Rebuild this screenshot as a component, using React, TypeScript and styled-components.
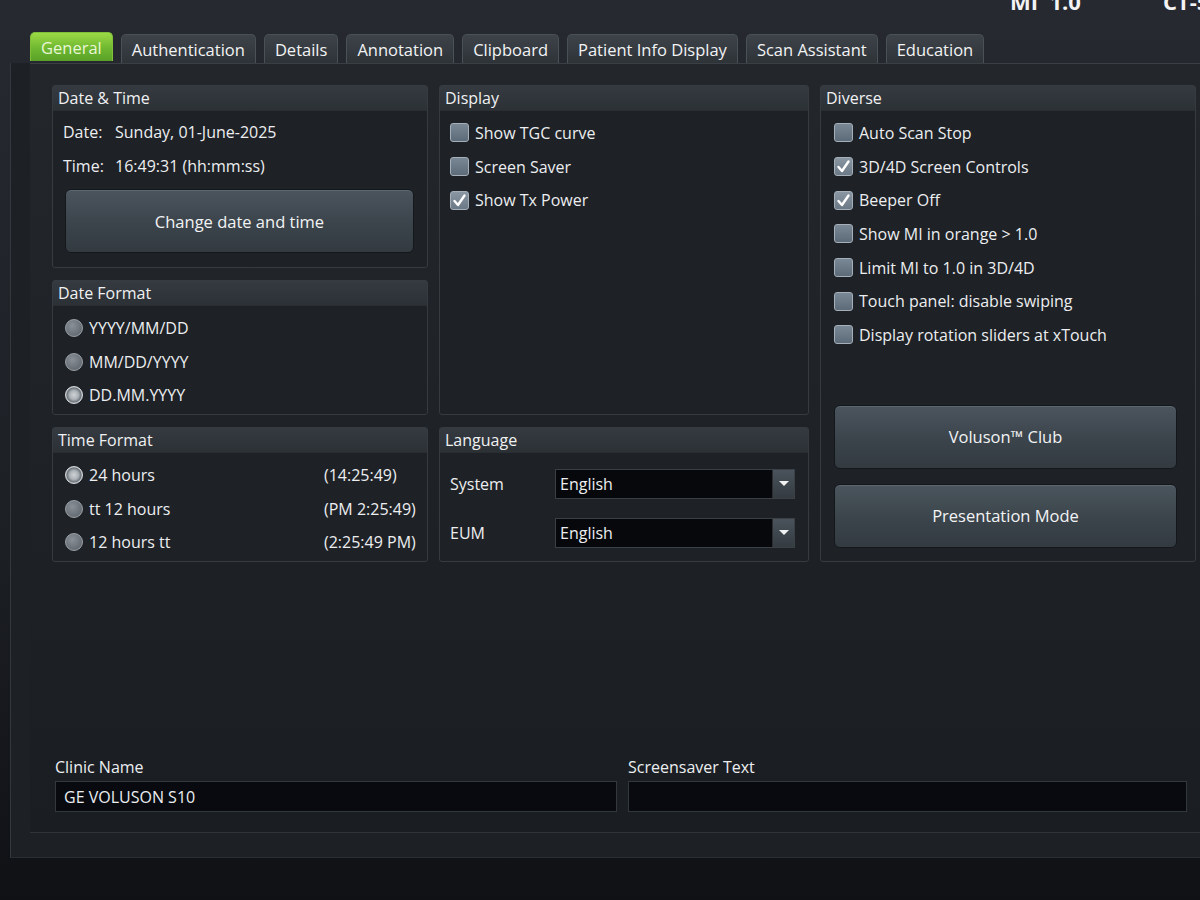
import React from 'react';
import styled, { createGlobalStyle } from 'styled-components';

const GlobalStyle = createGlobalStyle`
  html, body {
    margin: 0;
    padding: 0;
    width: 1200px;
    height: 900px;
    overflow: hidden;
    background: linear-gradient(180deg, #262a30 0%, #1c1f24 60%, #0f1115 100%);
    font-family: "Open Sans", "Noto Sans", "Liberation Sans", sans-serif;
    color: #eceef0;
  }
`;

const Screen = styled.div`
  width: 1200px;
  height: 900px;
  display: flex;
  flex-direction: column;
  overflow: hidden;
`;

const StatusStrip = styled.div`
  height: 10px;
  overflow: hidden;
  display: flex;
  align-items: flex-end;
  gap: 82px;
  padding-left: 1010px;
`;

const StatusText = styled.span`
  font-size: 22px;
  font-weight: 700;
  line-height: 22px;
  margin-bottom: -2px;
  white-space: nowrap;
  color: #f4f4f4;
`;

const TabBar = styled.div`
  display: flex;
  gap: 8px;
  margin: 22px 0 0 30px;
  align-items: flex-end;
`;

const Tab = styled.div<{ $active?: boolean }>`
  height: 28px;
  padding: 0 10px;
  display: flex;
  align-items: center;
  font-size: 16.5px;
  border-radius: 5px 5px 0 0;
  border: 1px solid ${p => (p.$active ? '#7fc23a' : '#4a5057')};
  border-bottom: none;
  background: ${p =>
    p.$active
      ? 'linear-gradient(180deg, #9bd945 0%, #6bb52f 60%, #5aa228 100%)'
      : 'linear-gradient(180deg, #3d4349 0%, #2e3338 100%)'};
  color: ${p => (p.$active ? '#e8f6d6' : '#f2f3f4')};
  margin-bottom: ${p => (p.$active ? '2px' : '0')};
`;

const Frame = styled.div`
  margin-left: 10px;
  border-left: 1px solid #33383e;
  padding: 0 0 24px 19px;
  background: #1d2025;
  border-bottom: 1px solid #2a2e33;
`;

const Page = styled.div`
  height: 770px;
  box-sizing: border-box;
  padding: 21px 0 20px 22px;
  background: linear-gradient(180deg, #23272c 0%, #1a1d22 100%);
  border-top: 1px solid #3a3f45;
  border-bottom: 1px solid #2f3439;
  display: flex;
  flex-direction: column;
`;

const Columns = styled.div`
  display: grid;
  grid-template-columns: 376px 370px 376px;
  column-gap: 11px;
  align-items: start;
`;

const Column = styled.div`
  display: flex;
  flex-direction: column;
  gap: 12px;
`;

const Group = styled.div<{ $h: number }>`
  height: ${p => p.$h}px;
  box-sizing: border-box;
  border: 1px solid #363b41;
  border-radius: 3px;
  background: #1e2126;
  display: flex;
  flex-direction: column;
`;

const GroupTitle = styled.div`
  height: 24px;
  line-height: 24px;
  padding-left: 5px;
  font-size: 16px;
  background: linear-gradient(180deg, #343a40 0%, #2c3136 100%);
  border-bottom: 1px solid #2a2e33;
  color: #f0f1f2;
`;

const GroupBody = styled.div<{ $pad?: string }>`
  flex: 1;
  display: flex;
  flex-direction: column;
  padding: ${p => p.$pad || '6px 10px'};
`;

const InfoRow = styled.div`
  height: 34px;
  display: flex;
  align-items: center;
  font-size: 16px;
`;

const InfoLabel = styled.span`
  width: 52px;
`;

const BigButton = styled.div<{ $mt?: number; $ml?: number }>`
  height: 64px;
  margin-top: ${p => p.$mt ?? 0}px;
  margin-left: ${p => p.$ml ?? 0}px;
  box-sizing: border-box;
  border-radius: 6px;
  border: 1px solid #15181b;
  background: linear-gradient(180deg, #4b555d 0%, #3b444b 55%, #333b41 100%);
  box-shadow: inset 0 1px 0 #5d6770;
  display: flex;
  align-items: center;
  justify-content: center;
  font-size: 16.5px;
  color: #f2f3f4;
`;

const OptionRow = styled.div`
  height: 33.7px;
  display: flex;
  align-items: center;
  gap: 6px;
  font-size: 16px;
`;

const Box = styled.span<{ $on?: boolean }>`
  width: 19px;
  height: 19px;
  box-sizing: border-box;
  border-radius: 3px;
  border: 1px solid #a4afb9;
  background: ${p =>
    p.$on
      ? 'linear-gradient(180deg, #8a97a3 0%, #6b7885 100%)'
      : 'linear-gradient(180deg, #7a8794 0%, #5d6a77 100%)'};
  display: flex;
  align-items: center;
  justify-content: center;
  flex-shrink: 0;
`;

const Radio = styled.span<{ $on?: boolean }>`
  width: 18px;
  height: 18px;
  box-sizing: border-box;
  border-radius: 50%;
  border: 1px solid ${p => (p.$on ? '#d8dcdf' : '#9aa1a8')};
  background: ${p =>
    p.$on
      ? 'radial-gradient(circle, #cfd3d6 0%, #aab0b5 40%, #6e757c 62%, #d0d4d8 80%)'
      : 'radial-gradient(circle at 40% 35%, #8a9097 0%, #676d74 70%)'};
  flex-shrink: 0;
`;

const RadioLabel = styled.span`
  flex: 1;
`;

const RadioHint = styled.span`
  width: 93px;
`;

const SelectRow = styled.div`
  height: 49px;
  display: flex;
  align-items: center;
  font-size: 16px;
`;

const SelectLabel = styled.span`
  width: 105px;
`;

const Select = styled.div`
  width: 240px;
  height: 30px;
  box-sizing: border-box;
  border: 1px solid #3b4046;
  background: #07080c;
  display: flex;
  align-items: center;
`;

const SelectValue = styled.span`
  flex: 1;
  padding-left: 4px;
`;

const SelectArrow = styled.span`
  width: 21px;
  height: 28px;
  border-left: 1px solid #2a2e33;
  background: linear-gradient(180deg, #4a535b 0%, #343b41 100%);
  display: flex;
  align-items: center;
  justify-content: center;
`;

const Triangle = styled.span`
  width: 0;
  height: 0;
  border-left: 5px solid transparent;
  border-right: 5px solid transparent;
  border-top: 5px solid #f2f2f2;
`;

const Spacer = styled.div`
  flex: 1;
`;

const Fields = styled.div`
  display: grid;
  grid-template-columns: 562px 559px;
  column-gap: 11px;
  padding-left: 3px;
`;

const Field = styled.div`
  display: flex;
  flex-direction: column;
  gap: 3px;
`;

const FieldLabel = styled.div`
  font-size: 16px;
  height: 22px;
  line-height: 22px;
`;

const Input = styled.div`
  height: 31px;
  box-sizing: border-box;
  border: 1px solid #33383e;
  background: #080a10;
  padding-left: 8px;
  display: flex;
  align-items: center;
  font-size: 16px;
`;

const Check = () => (
  <svg width="15" height="15" viewBox="0 0 15 15">
    <polyline points="2.5,8 6,12 12.5,2.5" fill="none" stroke="#ffffff" strokeWidth="2.4" strokeLinecap="round" strokeLinejoin="round" />
  </svg>
);

const CheckOption = ({ label, checked }: { label: string; checked?: boolean }) => (
  <OptionRow>
    <Box $on={checked}>{checked && <Check />}</Box>
    <span>{label}</span>
  </OptionRow>
);

const RadioOption = ({ label, hint, on }: { label: string; hint?: string; on?: boolean }) => (
  <OptionRow>
    <Radio $on={on} />
    <RadioLabel>{label}</RadioLabel>
    {hint && <RadioHint>{hint}</RadioHint>}
  </OptionRow>
);

const tabs = ['General', 'Authentication', 'Details', 'Annotation', 'Clipboard', 'Patient Info Display', 'Scan Assistant', 'Education'];

export default function App() {
  return (
    <Screen>
      <GlobalStyle />
      <StatusStrip>
        <StatusText>MI&nbsp;&nbsp;1.0</StatusText>
        <StatusText>CT-5</StatusText>
      </StatusStrip>
      <TabBar>
        {tabs.map((t, i) => (
          <Tab key={t} $active={i === 0}>{t}</Tab>
        ))}
      </TabBar>
      <Frame>
        <Page>
          <Columns>
            <Column>
              <Group $h={183}>
                <GroupTitle>Date &amp; Time</GroupTitle>
                <GroupBody $pad="4px 13px 0 10px">
                  <InfoRow><InfoLabel>Date:</InfoLabel>Sunday, 01-June-2025</InfoRow>
                  <InfoRow><InfoLabel>Time:</InfoLabel>16:49:31 (hh:mm:ss)</InfoRow>
                  <BigButton $mt={6} $ml={2}>Change date and time</BigButton>
                </GroupBody>
              </Group>
              <Group $h={135}>
                <GroupTitle>Date Format</GroupTitle>
                <GroupBody $pad="5px 10px 0 12px">
                  <RadioOption label="YYYY/MM/DD" />
                  <RadioOption label="MM/DD/YYYY" />
                  <RadioOption label="DD.MM.YYYY" on />
                </GroupBody>
              </Group>
              <Group $h={135}>
                <GroupTitle>Time Format</GroupTitle>
                <GroupBody $pad="5px 10px 0 12px">
                  <RadioOption label="24 hours" hint="(14:25:49)" on />
                  <RadioOption label="tt 12 hours" hint="(PM 2:25:49)" />
                  <RadioOption label="12 hours tt" hint="(2:25:49 PM)" />
                </GroupBody>
              </Group>
            </Column>
            <Column>
              <Group $h={330}>
                <GroupTitle>Display</GroupTitle>
                <GroupBody $pad="5px 10px 0 10px">
                  <CheckOption label="Show TGC curve" />
                  <CheckOption label="Screen Saver" />
                  <CheckOption label="Show Tx Power" checked />
                </GroupBody>
              </Group>
              <Group $h={135}>
                <GroupTitle>Language</GroupTitle>
                <GroupBody $pad="6px 10px 0 10px">
                  <SelectRow>
                    <SelectLabel>System</SelectLabel>
                    <Select><SelectValue>English</SelectValue><SelectArrow><Triangle /></SelectArrow></Select>
                  </SelectRow>
                  <SelectRow>
                    <SelectLabel>EUM</SelectLabel>
                    <Select><SelectValue>English</SelectValue><SelectArrow><Triangle /></SelectArrow></Select>
                  </SelectRow>
                </GroupBody>
              </Group>
            </Column>
            <Column>
              <Group $h={477}>
                <GroupTitle>Diverse</GroupTitle>
                <GroupBody $pad="5px 18px 0 13px">
                  <CheckOption label="Auto Scan Stop" />
                  <CheckOption label="3D/4D Screen Controls" checked />
                  <CheckOption label="Beeper Off" checked />
                  <CheckOption label="Show MI in orange > 1.0" />
                  <CheckOption label="Limit MI to 1.0 in 3D/4D" />
                  <CheckOption label="Touch panel: disable swiping" />
                  <CheckOption label="Display rotation sliders at xTouch" />
                  <BigButton $mt={53}>Voluson™ Club</BigButton>
                  <BigButton $mt={15}>Presentation Mode</BigButton>
                </GroupBody>
              </Group>
            </Column>
          </Columns>
          <Spacer />
          <Fields>
            <Field>
              <FieldLabel>Clinic Name</FieldLabel>
              <Input>GE VOLUSON S10</Input>
            </Field>
            <Field>
              <FieldLabel>Screensaver Text</FieldLabel>
              <Input />
            </Field>
          </Fields>
        </Page>
      </Frame>
    </Screen>
  );
}
